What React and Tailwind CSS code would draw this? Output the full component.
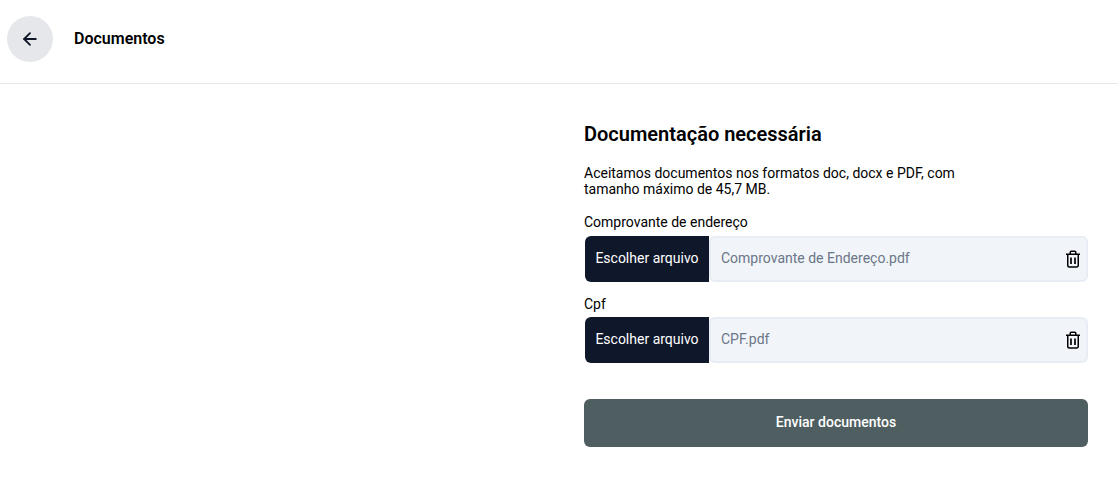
import React from "react";
import { ArrowLeft } from "lucide-react";

function TrashIcon() {
  return (
    <svg width="16" height="18" viewBox="0 0 16 18" fill="none" stroke="#000" strokeWidth="1.5" className="shrink-0">
      <path d="M1 4.25h14" />
      <path d="M5.25 4V2.25a1 1 0 0 1 1-1h3.5a1 1 0 0 1 1 1V4" />
      <path d="M2.75 4.25V15.5a1.5 1.5 0 0 0 1.5 1.5h7.5a1.5 1.5 0 0 0 1.5-1.5V4.25" />
      <path d="M6 7.5v6.5M10 7.5v6.5" strokeWidth="1.7" />
    </svg>
  );
}

function FileField({ label, name, className, rowClass }) {
  return (
    <div className={className}>
      <label className="block text-[14px] leading-[16px] text-black">{label}</label>
      <div className={rowClass}>
        <button className="ml-[1px] flex w-[124px] shrink-0 items-center justify-center rounded-l-[6px] bg-[#0f172a] pb-[2px] text-[14px] text-white">
          Escolher arquivo
        </button>
        <div className="flex flex-1 items-center justify-between rounded-[6px] border-2 border-[#e8edf5] bg-[#f1f5f9] pb-[2px] pl-[10px] pr-[5px] text-[14px] text-[#6b7688]">
          <span>{name}</span>
          <span className="mt-[2px] flex"><TrashIcon /></span>
        </div>
      </div>
    </div>
  );
}

export default function App() {
  return (
    <div className="min-h-[477px] bg-white font-['Roboto',sans-serif]">
      <header className="flex h-[84px] items-center border-b border-[#e5e7eb] pb-[5px] pl-[7px]">
        <button className="flex h-[46px] w-[46px] items-center justify-center rounded-full bg-[#e5e7eb] text-[#111827]">
          <ArrowLeft size={20} strokeWidth={2.2} />
        </button>
        <h1 className="ml-[21px] text-[16px] font-semibold text-black">Documentos</h1>
      </header>
      <main className="ml-[584px] w-[504px] pt-[37px]">
        <h2 className="text-[20px] leading-[26px] font-semibold text-black">Documentação necessária</h2>
        <p className="mt-[18px] w-[400px] text-[14px] leading-[16px] text-black">
          Aceitamos documentos nos formatos doc, docx e PDF, com tamanho máximo de 45,7 MB.
        </p>
        <FileField className="mt-[17px]" rowClass="mt-[6px] flex h-[46px]" label="Comprovante de endereço" name="Comprovante de Endereço.pdf" />
        <FileField className="mt-[14px]" rowClass="mt-[5px] flex h-[46px]" label="Cpf" name="CPF.pdf" />
        <button className="mt-[36px] h-[48px] w-full rounded-[6px] bg-[#4f5f61] pb-[2px] text-[14px] font-medium text-white">
          Enviar documentos
        </button>
      </main>
    </div>
  );
}
